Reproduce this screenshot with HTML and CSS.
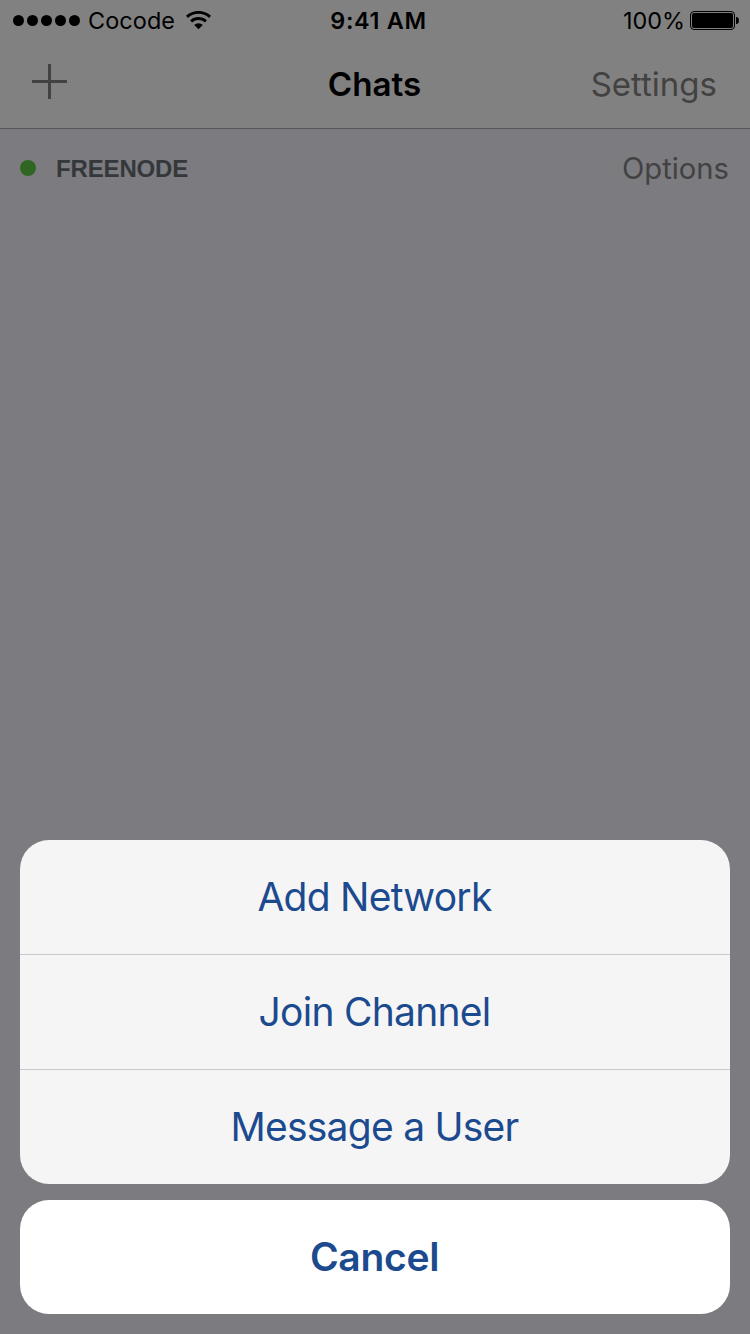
FILE: index.html
```html
<!DOCTYPE html>
<html lang="en">
<head>
<meta charset="utf-8">
<title>Chats</title>
<link rel="stylesheet" href="styles.css">
</head>
<body>
<main class="screen">
  <header class="header">
    <div class="status">
      <div class="carrier">
        <svg class="signal" width="68" height="12" viewBox="0 0 68 12"><circle cx="5.5" cy="5.5" r="5.5"/><circle cx="19.5" cy="5.5" r="5.5"/><circle cx="33.5" cy="5.5" r="5.5"/><circle cx="47.5" cy="5.5" r="5.5"/><circle cx="61.5" cy="5.5" r="5.5"/></svg>
        <span class="carrier-name">Cocode</span>
        <svg class="wifi" width="25" height="19" viewBox="0 0 25 19"><path d="M1 5.9a17 17 0 0 1 23 0M5.1 10.4a11 11 0 0 1 14.8 0" fill="none" stroke="#000" stroke-width="2.9"/><path d="M12.5 18.2l-4.3-4.3a6.3 6.3 0 0 1 8.6 0z"/></svg>
      </div>
      <span class="time">9:41 AM</span>
      <div class="power">
        <span class="percent">100%</span>
        <svg class="battery" width="49" height="19" viewBox="0 0 49 19"><rect x=".5" y=".5" width="44" height="18" rx="3.5" fill="none" stroke="#000"/><rect x="2" y="2" width="41" height="15" rx="2"/><path d="M46 6h1q2 .5 2 3.5t-2 3.5h-1z"/></svg>
      </div>
    </div>
    <nav class="nav">
      <svg class="plus" width="35" height="35" viewBox="0 0 35 35"><path d="M0 17.5h35M17.5 0v35"/></svg>
      <h1 class="title">Chats</h1>
      <span class="settings">Settings</span>
    </nav>
  </header>
  <section class="network">
    <i class="online"></i>
    <h2 class="network-name">FREENODE</h2>
    <span class="options">Options</span>
  </section>
  <section class="sheet">
    <div class="actions">
      <div class="action"><span>Add Network</span></div>
      <div class="action"><span>Join Channel</span></div>
      <div class="action"><span>Message a User</span></div>
    </div>
    <div class="cancel"><span>Cancel</span></div>
  </section>
</main>
</body>
</html>
```
FILE: styles.css
```css
* { box-sizing: border-box; }
body { margin: 0; font-family: Inter, sans-serif; color: #000; }
.screen { width: 750px; height: 1334px; display: flex; flex-direction: column; background: #7c7b80; }
.header { height: 129px; background: #818181; border-bottom: 1px solid #56555a; }
.status { height: 41px; padding: 0 11px 0 13px; display: grid; grid-template-columns: 1fr auto 1fr; align-items: center; font-size: 23.4px; }
.carrier, .power { display: flex; align-items: center; }
.carrier-name { margin-left: 7px; letter-spacing: 0.1px; }
.wifi { margin-left: 11px; }
.time { font-weight: 600; letter-spacing: 0.7px; padding-left: 5px; }
.power { justify-content: flex-end; gap: 5px; }
.nav { height: 87px; padding: 0 33px 0 32px; display: grid; grid-template-columns: 1fr auto 1fr; align-items: center; }
.plus { margin-bottom: 6px; stroke: #424242; stroke-width: 3; }
.title { margin: 0; padding-bottom: 2px; font-size: 33.2px; font-weight: 600; }
.settings { justify-self: end; padding-bottom: 2px; font-size: 33px; color: #424242; }
.network { height: 78px; padding: 0 21px 0 20px; display: flex; align-items: center; }
.online { width: 16px; height: 16px; border-radius: 50%; background: #2f6624; }
.network-name { margin: 0 auto 0 20px; padding-top: 2px; font: bold 24px "Liberation Sans", sans-serif; letter-spacing: -0.15px; color: #34383b; }
.options { padding-top: 1px; font-size: 29.2px; color: #424242; }
.sheet { margin: auto 20px 20px; display: flex; flex-direction: column; gap: 16px; color: #1c4a8e; font-size: 39px; letter-spacing: -0.75px; }
.actions { height: 344px; border-radius: 29px; overflow: hidden; background: #f5f5f5; display: grid; grid-template-rows: 114px 115px 115px; }
.action { padding: 0 1px 2px 0; display: flex; align-items: center; justify-content: center; }
.action + .action { border-top: 1px solid #c8c8cc; }
.cancel { height: 114px; padding: 0 1px 2px 0; border-radius: 29px; background: #fff; display: flex; align-items: center; justify-content: center; font-weight: 600; letter-spacing: -0.3px; }
```
